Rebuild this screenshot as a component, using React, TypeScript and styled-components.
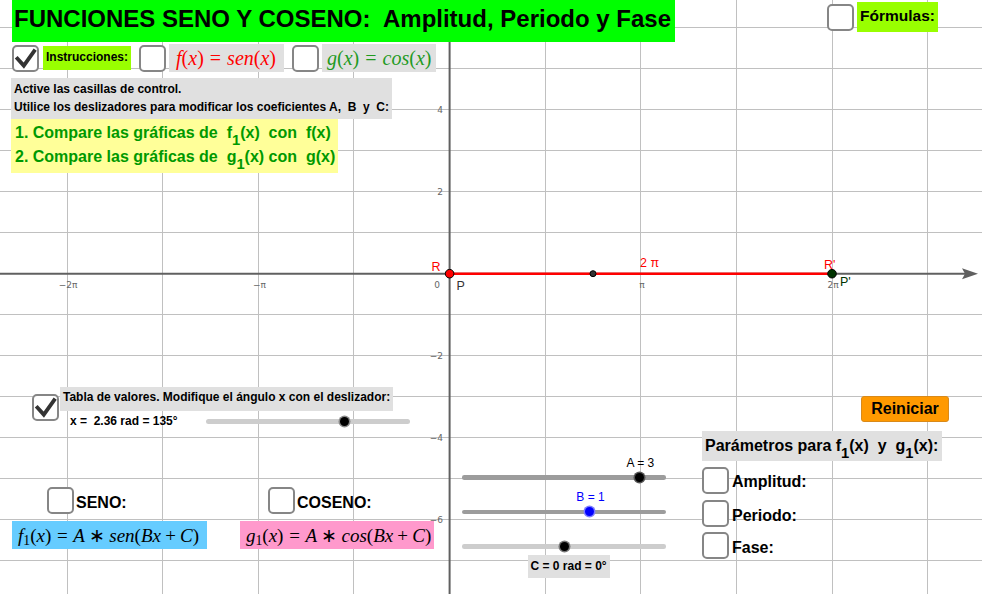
import React from "react";
import styled, { createGlobalStyle } from "styled-components";

const Global = createGlobalStyle`
  html, body { margin: 0; padding: 0; background: #fff; }
  body { font-family: "Liberation Sans", Arial, sans-serif; color: #000; }
  #root { width: 982px; height: 594px; }
`;

const SANS = `"Liberation Sans", Arial, sans-serif`;
const SERIF = `"Liberation Serif", "Times New Roman", serif`;

/* ---------- canvas ---------- */
const Stage = styled.div`
  position: relative;
  width: 982px;
  height: 594px;
  overflow: hidden;
  background: #fff;
`;

const GraphSvg = styled.svg`
  position: absolute;
  left: 0;
  top: 0;
  display: block;
`;

/* ---------- checkbox ---------- */
const BoxFrame = styled.span`
  display: inline-flex;
  align-items: center;
  justify-content: center;
  flex: none;
  width: 27px;
  height: 27px;
  box-sizing: border-box;
  border: 2px solid #868686;
  border-radius: 5px;
  background: #fff;
`;

function CheckBox({ checked = false }: { checked?: boolean }) {
  return (
    <BoxFrame>
      {checked && (
        <svg width="23" height="23" viewBox="0 0 23 23">
          <path d="M2.2 10.2 L9.8 18.6 L21.2 2.6" fill="none" stroke="#333" strokeWidth="3.8" strokeLinejoin="miter" />
        </svg>
      )}
    </BoxFrame>
  );
}

/* ---------- TeX-like formula text ---------- */
const Tex = styled.span<{ $color: string; $size: number }>`
  font-family: ${SERIF};
  font-style: italic;
  font-size: ${(p) => p.$size}px;
  line-height: 1;
  color: ${(p) => p.$color};
  white-space: nowrap;
`;
const Up = styled.span`
  font-style: normal;
`;
const Rel = styled.span`
  font-style: normal;
  padding: 0 0.3em;
`;
const Bin = styled.span`
  font-style: normal;
  padding: 0 0.22em;
`;
const TexSub = styled.span`
  font-style: normal;
  font-size: 0.72em;
  vertical-align: -0.22em;
  line-height: 0;
`;

const Sub = styled.span`
  font-size: 0.92em;
  vertical-align: -0.46em;
  line-height: 0;
`;

/* ---------- title ---------- */
const Title = styled.h1`
  position: absolute;
  left: 12px;
  top: 0;
  margin: 0;
  height: 42px;
  box-sizing: border-box;
  padding: 7px 4px 0 2px;
  background: #00ff00;
  font: bold 24px/24px ${SANS};
  white-space: pre;
`;

/* ---------- top bar ---------- */
const TopBar = styled.div`
  position: absolute;
  left: 12px;
  top: 44px;
  height: 28px;
  display: flex;
  align-items: center;
  gap: 8px;
`;

const Toggle = styled.div<{ $gap: number }>`
  display: flex;
  align-items: center;
  gap: ${(p) => p.$gap}px;
`;

const LimeTag = styled.span<{ $size: number; $h: number; $lh: number }>`
  display: inline-block;
  height: ${(p) => p.$h}px;
  padding: 0 3px;
  background: #99ff00;
  font: bold ${(p) => p.$size}px/${(p) => p.$lh}px ${SANS};
  white-space: nowrap;
`;

const GreyTex = styled.span<{ $pl: number; $pr: number }>`
  display: inline-flex;
  align-items: center;
  height: 28px;
  padding: 0 ${(p) => p.$pr}px 0 ${(p) => p.$pl}px;
  background: #e0e0e0;
`;

/* ---------- instruction panels ---------- */
const InfoPanel = styled.div`
  position: absolute;
  left: 11px;
  top: 78px;
  height: 41px;
  box-sizing: border-box;
  padding: 2px 3px 3px 3px;
  background: #e0e0e0;
  font: bold 12px/18px ${SANS};
  white-space: pre;
`;

const TaskPanel = styled.div`
  position: absolute;
  left: 11px;
  top: 119px;
  height: 54px;
  box-sizing: border-box;
  padding: 2px 3px 4px 4px;
  background: #ffff99;
  color: #009900;
  font: bold 16px/24px ${SANS};
  white-space: pre;
`;

const Line = styled.div``;

/* ---------- formulas toggle (top right) ---------- */
const FormulasToggle = styled(Toggle)`
  position: absolute;
  left: 827px;
  top: 2px;
  height: 30px;
`;

/* ---------- table of values ---------- */
const TableGroup = styled.div`
  position: absolute;
  left: 32px;
  top: 387px;
  display: flex;
  align-items: flex-start;
  gap: 1px;
`;

const TableCheck = styled.div`
  margin-top: 7px;
`;

const TableBody = styled.div`
  display: flex;
  flex-direction: column;
  align-items: flex-start;
`;

const GreyLabel = styled.div<{ $h: number; $lh: number }>`
  height: ${(p) => p.$h}px;
  box-sizing: border-box;
  padding: 0 3px;
  background: #e0e0e0;
  font: bold 12px/${(p) => p.$lh}px ${SANS};
  white-space: pre;
`;

const ValueRow = styled.div`
  display: flex;
  align-items: center;
  height: 14px;
  margin-top: 3px;
  padding-left: 10px;
`;

const ValueText = styled.span`
  width: 136px;
  font: bold 12px/14px ${SANS};
  white-space: pre;
`;

/* ---------- sliders ---------- */
const Track = styled.div<{ $w: number; $tone: "dark" | "light"; $t: number }>`
  position: relative;
  width: ${(p) => p.$w}px;
  height: ${(p) => p.$t}px;
  border-radius: ${(p) => p.$t / 2}px;
  background: ${(p) => (p.$tone === "dark" ? "#9c9c9c" : "#cdcdcd")};
`;

const Knob = styled.span<{ $fill: string; $halo: string }>`
  position: absolute;
  top: 50%;
  width: 9px;
  height: 9px;
  margin: -4.5px 0 0 -4.5px;
  border-radius: 50%;
  background: ${(p) => p.$fill};
  box-shadow: 0 0 0 1.5px ${(p) => p.$halo};
`;

const KnobCaption = styled.span<{ $color: string }>`
  position: absolute;
  left: 50%;
  bottom: calc(100% + 3px);
  transform: translateX(-45%);
  color: ${(p) => p.$color};
  font: 12px/14px ${SANS};
  white-space: pre;
`;

const KnobTag = styled.span`
  position: absolute;
  left: -32px;
  top: calc(100% + 4.5px);
  height: 23px;
  padding: 0 3px;
  background: #e0e0e0;
  font: bold 12px/23px ${SANS};
  white-space: pre;
`;

const SliderStack = styled.div`
  position: absolute;
  left: 462px;
  top: 475px;
  display: flex;
  flex-direction: column;
  gap: 30px;
`;

/* ---------- SENO / COSENO ---------- */
const FormulaRow = styled.div`
  position: absolute;
  left: 12px;
  top: 487px;
  display: grid;
  grid-template-columns: 228px auto;
`;

const FormulaColumn = styled.div<{ $indent: number }>`
  display: flex;
  flex-direction: column;
  align-items: flex-start;
  gap: 7px;
  & > :first-child {
    margin-left: ${(p) => p.$indent}px;
  }
`;

const BigLabel = styled.span<{ $drop: number }>`
  font: bold 16px ${SANS};
  margin-top: ${(p) => p.$drop}px;
  white-space: pre;
`;

const ColorTex = styled.span<{ $bg: string; $pr: number }>`
  display: inline-flex;
  align-items: center;
  height: 28px;
  padding: 0 ${(p) => p.$pr}px 0 6px;
  background: ${(p) => p.$bg};
`;

/* ---------- right panel ---------- */
const ResetButton = styled.button`
  position: absolute;
  left: 861px;
  top: 396px;
  width: 88px;
  height: 26px;
  margin: 0;
  padding: 0;
  box-sizing: border-box;
  border: 1px solid #d98a1a;
  border-radius: 3px;
  background: #ff9900;
  color: #000;
  font: bold 16px/24px ${SANS};
  cursor: pointer;
`;

const ParamPanel = styled.div`
  position: absolute;
  left: 702px;
  top: 431px;
  display: flex;
  flex-direction: column;
  align-items: flex-start;
  gap: 5.5px;
`;

const ParamHeading = styled.div`
  height: 30px;
  box-sizing: border-box;
  padding: 0 4px 0 3px;
  margin-bottom: 0.5px;
  background: #e0e0e0;
  font: bold 16px/29px ${SANS};
  white-space: pre;
`;

/* ---------- graph drawing ---------- */
const OX = 449.6;
const OY = 273.7;
const DX = 95.62;
const DY = 41;

function Graph() {
  const vLines: number[] = [];
  for (let k = -5; k <= 6; k++) {
    const x = OX + k * DX;
    if (x > 0 && x < 982 && k !== 0) vLines.push(x);
  }
  const hLines: number[] = [];
  for (let k = -7; k <= 8; k++) {
    const y = OY + k * DY;
    if (y > 0 && y < 594 && k !== 0) hLines.push(y);
  }
  const yLabels = [4, 2, -2, -4, -6];
  const xLabels: [number, string][] = [
    [-4, "\u22122\u03c0"],
    [-2, "\u2212\u03c0"],
    [2, "\u03c0"],
    [4, "2\u03c0"],
  ];
  return (
    <GraphSvg width="982" height="594" viewBox="0 0 982 594">
      <g stroke="#c0c0c0" strokeWidth="1" shapeRendering="crispEdges">
        {vLines.map((x) => (
          <line key={"v" + x} x1={x} y1={0} x2={x} y2={594} />
        ))}
        {hLines.map((y) => (
          <line key={"h" + y} x1={0} y1={y} x2={982} y2={y} />
        ))}
      </g>
      <g fill="#666" fontFamily='"DejaVu Sans", sans-serif' fontSize="9">
        {yLabels.map((v) => (
          <text key={"yl" + v} x={443} y={OY - v * DY + 3.5} textAnchor="end">
            {v < 0 ? "\u2212" + Math.abs(v) : String(v)}
          </text>
        ))}
        {xLabels.map(([k, t]) => (
          <text key={"xl" + k} x={OX + k * DX + 1} y={288} textAnchor="middle">
            {t}
          </text>
        ))}
        <text x={437} y={288} textAnchor="middle">0</text>
      </g>
      {/* axes */}
      <line x1={OX} y1={0} x2={OX} y2={594} stroke="#606060" strokeWidth="2" />
      <line x1={0} y1={OY} x2={966} y2={OY} stroke="#606060" strokeWidth="2" />
      <path d={`M978 ${OY} L962 ${OY - 5.5} L965 ${OY} L962 ${OY + 5.5} Z`} fill="#606060" />
      {/* red segment */}
      <line x1={OX} y1={OY} x2={832} y2={OY} stroke="#ff0000" strokeWidth="2.4" />
      {/* points */}
      <circle cx={593} cy={OY} r={3} fill="#333" stroke="#000" strokeWidth="1" />
      <circle cx={832} cy={OY} r={4.3} fill="#003300" stroke="#000" strokeWidth="1" />
      <circle cx={OX} cy={OY} r={4.3} fill="#ff0000" stroke="#000" strokeWidth="1" />
      {/* point labels */}
      <g fontFamily='"Liberation Sans", Arial, sans-serif' fontSize="12.5">
        <text x={431.5} y={271} fill="#ff0000">R</text>
        <text x={456.5} y={290} fill="#333">P</text>
        <text x={640} y={266.5} fill="#ff0000">2 {"\u03c0"}</text>
        <text x={824} y={268.5} fill="#ff0000">R'</text>
        <text x={840} y={285.5} fill="#003300">P'</text>
      </g>
    </GraphSvg>
  );
}

/* ---------- app ---------- */
export default function App() {
  return (
    <>
      <Global />
      <Stage>
        <Graph />

        <Title>{"FUNCIONES SENO Y COSENO:  Amplitud, Periodo y Fase"}</Title>

        <TopBar>
          <Toggle $gap={4}>
            <CheckBox checked />
            <LimeTag $size={12} $h={24} $lh={23}>Instrucciones:</LimeTag>
          </Toggle>
          <Toggle $gap={3}>
            <CheckBox />
            <GreyTex $pl={7} $pr={8}>
              <Tex $color="#ff0000" $size={20}>
                f<Up>(</Up>x<Up>)</Up>
                <Rel>=</Rel>
                sen<Up>(</Up>x<Up>)</Up>
              </Tex>
            </GreyTex>
          </Toggle>
          <Toggle $gap={3}>
            <CheckBox />
            <GreyTex $pl={5} $pr={5}>
              <Tex $color="#1f9a1f" $size={20}>
                g<Up>(</Up>x<Up>)</Up>
                <Rel>=</Rel>
                cos<Up>(</Up>x<Up>)</Up>
              </Tex>
            </GreyTex>
          </Toggle>
        </TopBar>

        <FormulasToggle $gap={3}>
          <CheckBox />
          <LimeTag $size={15.5} $h={30} $lh={28}>Fórmulas:</LimeTag>
        </FormulasToggle>

        <InfoPanel>
          <Line>Active las casillas de control.</Line>
          <Line>{"Utilice los deslizadores para modificar los coeficientes A,  B  y  C:"}</Line>
        </InfoPanel>

        <TaskPanel>
          <Line>
            {"1. Compare las gráficas de  f"}
            <Sub>1</Sub>
            {"(x)  con  f(x)"}
          </Line>
          <Line>
            {"2. Compare las gráficas de  g"}
            <Sub>1</Sub>
            {"(x) con  g(x)"}
          </Line>
        </TaskPanel>

        <TableGroup>
          <TableCheck>
            <CheckBox checked />
          </TableCheck>
          <TableBody>
            <GreyLabel $h={24} $lh={21}>Tabla de valores. Modifique el ángulo x con el deslizador:</GreyLabel>
            <ValueRow>
              <ValueText>{"x =  2.36 rad = 135°"}</ValueText>
              <Track $w={204} $tone="light" $t={5}>
                <Knob $fill="#000" $halo="#8a8a8a" style={{ left: "68.1%" }} />
              </Track>
            </ValueRow>
          </TableBody>
        </TableGroup>

        <SliderStack>
          <Track $w={204} $tone="dark" $t={4.5}>
            <Knob $fill="#000" $halo="#555" style={{ left: "86.8%" }}>
              <KnobCaption $color="#000">A = 3</KnobCaption>
            </Knob>
          </Track>
          <Track $w={204} $tone="dark" $t={4.5}>
            <Knob $fill="#0000ff" $halo="#7d7dff" style={{ left: "62.3%" }}>
              <KnobCaption $color="#0000ff">B = 1</KnobCaption>
            </Knob>
          </Track>
          <Track $w={204} $tone="light" $t={4.5}>
            <Knob $fill="#000" $halo="#777" style={{ left: "50%" }}>
              <KnobTag>C = 0 rad = 0°</KnobTag>
            </Knob>
          </Track>
        </SliderStack>

        <FormulaRow>
          <FormulaColumn $indent={35}>
            <Toggle $gap={2}>
              <CheckBox />
              <BigLabel $drop={5}>SENO:</BigLabel>
            </Toggle>
            <ColorTex $bg="#66ccff" $pr={8}>
              <Tex $color="#000" $size={19}>
                f<TexSub>1</TexSub>
                <Up>(</Up>x<Up>)</Up>
                <Rel>=</Rel>A<Bin>{"\u2217"}</Bin>sen<Up>(</Up>Bx<Bin>+</Bin>C<Up>)</Up>
              </Tex>
            </ColorTex>
          </FormulaColumn>
          <FormulaColumn $indent={28}>
            <Toggle $gap={2}>
              <CheckBox />
              <BigLabel $drop={4}>COSENO:</BigLabel>
            </Toggle>
            <ColorTex $bg="#ff99cc" $pr={3}>
              <Tex $color="#000" $size={19}>
                g<TexSub>1</TexSub>
                <Up>(</Up>x<Up>)</Up>
                <Rel>=</Rel>A<Bin>{"\u2217"}</Bin>cos<Up>(</Up>Bx<Bin>+</Bin>C<Up>)</Up>
              </Tex>
            </ColorTex>
          </FormulaColumn>
        </FormulaRow>

        <ResetButton type="button">Reiniciar</ResetButton>

        <ParamPanel>
          <ParamHeading>
            {"Parámetros para f"}
            <Sub>1</Sub>
            {"(x)  y  g"}
            <Sub>1</Sub>
            {"(x):"}
          </ParamHeading>
          <Toggle $gap={3}>
            <CheckBox />
            <BigLabel $drop={2}>Amplitud:</BigLabel>
          </Toggle>
          <Toggle $gap={3}>
            <CheckBox />
            <BigLabel $drop={5}>Periodo:</BigLabel>
          </Toggle>
          <Toggle $gap={3}>
            <CheckBox />
            <BigLabel $drop={4}>Fase:</BigLabel>
          </Toggle>
        </ParamPanel>
      </Stage>
    </>
  );
}
